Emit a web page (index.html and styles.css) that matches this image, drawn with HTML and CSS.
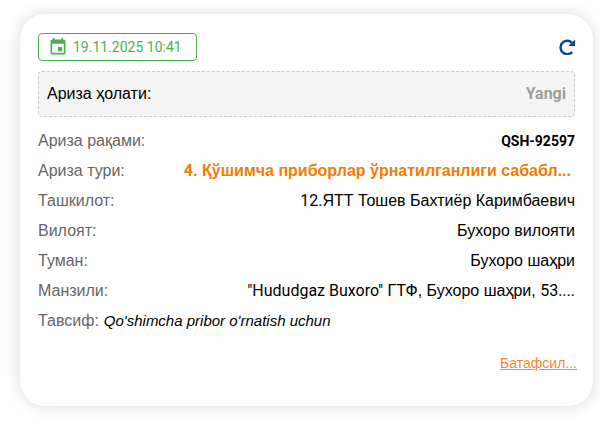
FILE: index.html
```html
<!DOCTYPE html>
<html lang="uz">
<head>
    <meta charset="UTF-8">
    <meta name="viewport" content="width=device-width, initial-scale=1.0">
    <title>Ариза</title>
    <link rel="stylesheet" href="styles.css">
</head>
<body>
    <div class="card">
        <div class="card-header">
            <div class="date-chip">
                <svg class="calendar-icon" viewBox="0 0 24 24" aria-hidden="true">
                    <path d="M17 12h-5v5h5v-5zM16 1v2H8V1H6v2H5c-1.11 0-1.99.9-1.99 2L3 19c0 1.1.89 2 2 2h14c1.1 0 2-.9 2-2V5c0-1.1-.9-2-2-2h-1V1h-2zm3 18H5V8h14v11z"/>
                </svg>
                <span>19.11.2025 10:41</span>
            </div>
            <button type="button" class="refresh" aria-label="Refresh">
                <svg viewBox="0 0 16 16" aria-hidden="true">
                    <path d="M13.2 13A6.7 6.7 0 1 1 12.8 3.6" fill="none" stroke="currentColor" stroke-width="2.5"/>
                    <path d="M16 .6v6.4H9.2z" fill="currentColor"/>
                </svg>
            </button>
        </div>
        <div class="status">
            <span>Ариза ҳолати:</span>
            <b class="status-value">Yangi</b>
        </div>
        <dl class="details">
            <div class="row">
                <dt>Ариза рақами:</dt>
                <dd class="number">QSH-92597</dd>
            </div>
            <div class="row">
                <dt>Ариза тури:</dt>
                <dd class="type"><span class="latin">4.</span> Қўшимча приборлар ўрнатилганлиги сабабл...</dd>
            </div>
            <div class="row">
                <dt>Ташкилот:</dt>
                <dd><span class="latin">12.</span>ЯТТ Тошев Бахтиёр Каримбаевич</dd>
            </div>
            <div class="row">
                <dt>Вилоят:</dt>
                <dd>Бухоро вилояти</dd>
            </div>
            <div class="row">
                <dt>Туман:</dt>
                <dd>Бухоро шаҳри</dd>
            </div>
            <div class="row">
                <dt>Манзили:</dt>
                <dd><span class="latin">"Hududgaz Buxoro"</span> ГТФ, Бухоро шаҳри, <span class="latin">53....</span></dd>
            </div>
            <div class="row description">
                <dt>Тавсиф:</dt>
                <dd>Qo'shimcha pribor o'rnatish uchun</dd>
            </div>
        </dl>
        <div class="card-footer">
            <a href="#" class="more">Батафсил...</a>
        </div>
    </div>
</body>
</html>
```
FILE: styles.css
```css
body {
    margin: 0;
    padding: 14px 7px 38px 20px;
    background: #fff;
    color: #000;
    font-family: "Liberation Sans", Arial, sans-serif;
    font-size: 16px;
    line-height: 20px;
}
.card {
    padding: 19px 18px 33px;
    border-radius: 25px;
    background: #fff;
    box-shadow: 0 0 16px rgba(0, 0, 0, 0.15);
}
.card-header {
    display: flex;
    justify-content: space-between;
    align-items: center;
    margin-bottom: 10px;
}
.date-chip, .status-value, .number, .latin {
    font-family: Roboto, "Liberation Sans", Arial, sans-serif;
}
.date-chip {
    display: flex;
    align-items: center;
    gap: 5px;
    box-sizing: border-box;
    height: 28px;
    padding: 0 14px 0 9px;
    border: 1px solid #4caf50;
    border-radius: 4px;
    color: #4caf50;
    font-size: 14px;
}
.calendar-icon {
    width: 20px;
    height: 20px;
    fill: currentColor;
}
.refresh {
    width: 16px;
    height: 16px;
    padding: 0;
    border: 0;
    background: none;
    color: #0d4590;
    cursor: pointer;
}
.refresh svg {
    display: block;
    width: 16px;
    height: 16px;
}
.status {
    display: flex;
    justify-content: space-between;
    padding: 12px 8px;
    border: 1px dashed #ccc;
    border-radius: 4px;
    background: #f4f4f4;
}
.status-value {
    color: #9e9e9e;
}
.details {
    margin: 14px 0 22px;
}
.row {
    display: flex;
    justify-content: space-between;
    gap: 5px;
    margin-bottom: 10px;
}
.row dt {
    color: #666;
}
.row dd {
    margin: 0;
}
.row .number {
    font-size: 14px;
    font-weight: 700;
}
.row .type {
    padding-right: 4px;
    color: #f57c00;
    font-weight: 700;
}
.description {
    justify-content: flex-start;
}
.description dd {
    font-size: 15px;
    font-style: italic;
}
.card-footer {
    margin-right: -2px;
    text-align: right;
}
.more {
    color: #f58634;
    font-size: 14px;
}
```
